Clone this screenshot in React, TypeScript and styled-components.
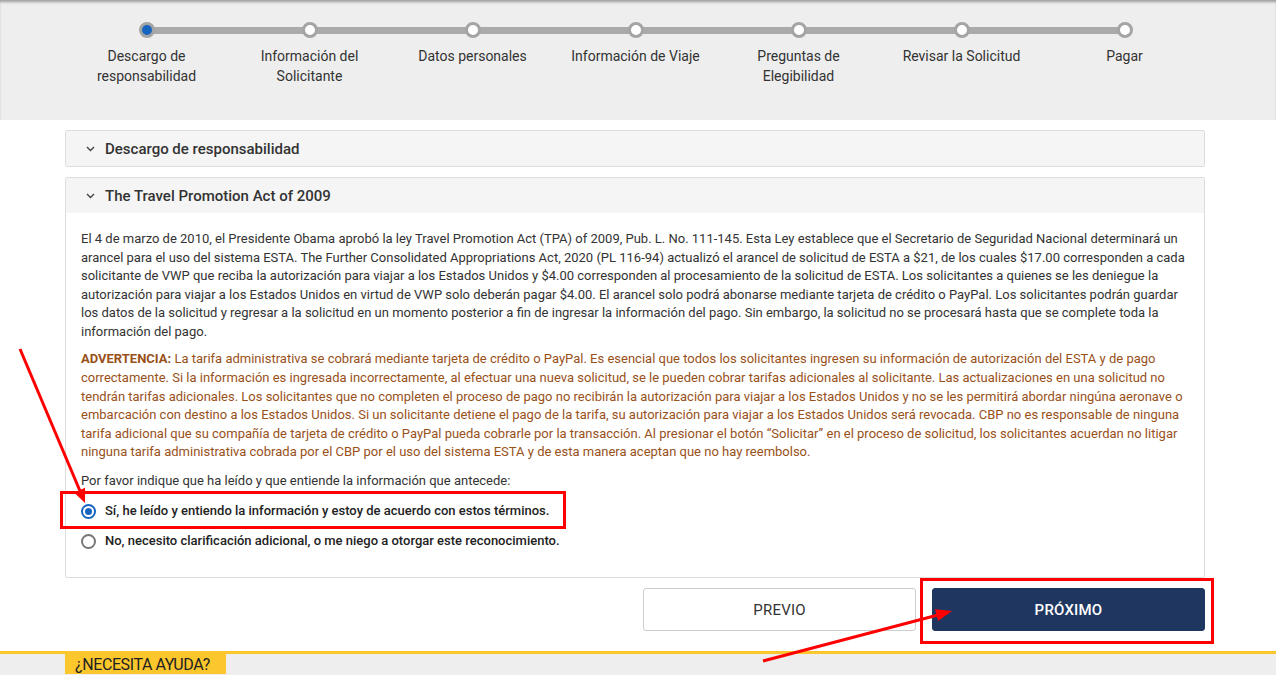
import React from "react";
import styled, { createGlobalStyle } from "styled-components";

const GlobalStyle = createGlobalStyle`
  html, body { margin: 0; padding: 0; background: #fff; }
  body { font-family: Roboto, "Liberation Sans", Arial, sans-serif; color: #333; }
  * { box-sizing: border-box; }
`;

const Page = styled.div`
  position: relative;
  width: 1276px;
  min-height: 675px;
  overflow: hidden;
`;

/* ---------- progress stepper ---------- */
const StepperBar = styled.header`
  background: #eeeeee;
  height: 120px;
  box-shadow: inset 0 3px 3px -1px rgba(0, 0, 0, 0.35);
`;

const Steps = styled.ol`
  position: relative;
  width: 1141px;
  margin: 0 0 0 65px;
  padding: 22px 0 0;
  list-style: none;
  display: grid;
  grid-template-columns: repeat(7, 1fr);

  &::before {
    content: "";
    position: absolute;
    left: 81px;
    right: 82px;
    top: 27px;
    height: 7px;
    background: #aaaaaa;
  }
`;

const Step = styled.li`
  position: relative;
  display: flex;
  flex-direction: column;
  align-items: center;
  text-align: center;
`;

const Dot = styled.span<{ $active?: boolean }>`
  width: 16px;
  height: 16px;
  border-radius: 50%;
  border: 3px solid #a4a4a4;
  background: ${(p) => (p.$active ? "#1565c0" : "#ffffff")};
`;

const StepLabel = styled.span`
  margin-top: 8px;
  font-size: 14px;
  line-height: 20px;
  color: #333;
`;

/* ---------- accordion ---------- */
const Main = styled.main`
  width: 1140px;
  margin: 10px 0 0 65px;
`;

const Panel = styled.section`
  border: 1px solid #dddddd;
  border-radius: 2px;
  background: #fff;
  margin-bottom: 10px;
`;

const PanelHeader = styled.div`
  height: 35px;
  display: flex;
  align-items: center;
  padding-left: 20px;
  background: #f5f5f5;
  font-size: 15px;
  font-weight: 500;
  color: #333;
`;

const Chevron = styled.svg`
  width: 9px;
  height: 6px;
  margin-right: 10px;
  flex: none;
`;

const PanelBody = styled.div`
  padding: 17px 15px 21px;
  font-size: 13px;
  line-height: 18.57px;
`;

const Para = styled.p<{ $gap?: number }>`
  margin: 0 0 ${(p) => p.$gap ?? 10}px;
  color: #333;
`;

const Warning = styled.p`
  margin: 0 0 10px;
  color: #99511a;
`;

const WarningTitle = styled.strong`
  font-weight: 700;
`;

const RadioList = styled.div`
  margin-top: 6px;
  display: flex;
  flex-direction: column;
`;

const RadioRow = styled.label`
  height: 30px;
  display: flex;
  align-items: center;
  gap: 9px;
  font-size: 13px;
  font-weight: 500;
  color: #222;
`;

const RadioMark = styled.span<{ $checked?: boolean }>`
  width: 15px;
  height: 15px;
  border-radius: 50%;
  border: 2px solid ${(p) => (p.$checked ? "#1565c0" : "#777")};
  display: flex;
  align-items: center;
  justify-content: center;
  background: #fff;

  &::after {
    content: "";
    width: 7px;
    height: 7px;
    border-radius: 50%;
    background: ${(p) => (p.$checked ? "#1565c0" : "transparent")};
  }
`;

/* ---------- navigation buttons ---------- */
const ButtonRow = styled.div`
  display: flex;
  justify-content: flex-end;
  gap: 16px;
  margin-top: 0;
`;

const NavButton = styled.button<{ $primary?: boolean }>`
  width: 273px;
  height: 43px;
  border-radius: 3px;
  font-family: Roboto, "Liberation Sans", Arial, sans-serif;
  font-size: 15px;
  font-weight: ${(p) => (p.$primary ? 500 : 400)};
  letter-spacing: 0.2px;
  cursor: pointer;
  border: 1px solid ${(p) => (p.$primary ? "#1e3660" : "#cccccc")};
  background: ${(p) => (p.$primary ? "#1e3660" : "#ffffff")};
  color: ${(p) => (p.$primary ? "#ffffff" : "#333333")};
`;

/* ---------- help footer ---------- */
const Footer = styled.footer`
  margin-top: 20px;
  border-top: 3px solid #fcc72c;
  background: #eeeeee;
  height: 60px;
  padding-left: 65px;
`;

const HelpTab = styled.div`
  display: inline-block;
  background: #fcc72c;
  height: 20px;
  width: 161px;
  padding: 0 0 0 10px;
  font-size: 16px;
  letter-spacing: -0.4px;
  line-height: 22px;
  white-space: nowrap;
  overflow: hidden;
  color: #222;
`;

/* ---------- red call-out marks drawn over the page ---------- */
const Callouts = styled.svg`
  position: absolute;
  top: 0;
  left: 0;
  width: 1276px;
  height: 675px;
  pointer-events: none;
`;

const steps = [
  ["Descargo de", "responsabilidad"],
  ["Información del", "Solicitante"],
  ["Datos personales"],
  ["Información de Viaje"],
  ["Preguntas de", "Elegibilidad"],
  ["Revisar la Solicitud"],
  ["Pagar"],
];

const ChevronIcon = () => (
  <Chevron viewBox="0 0 9 6">
    <path d="M1 1 L4.5 4.5 L8 1" fill="none" stroke="#444" strokeWidth="1.4" />
  </Chevron>
);

export default function App() {
  return (
    <Page>
      <GlobalStyle />
      <StepperBar>
        <Steps>
          {steps.map((lines, i) => (
            <Step key={i}>
              <Dot $active={i === 0} />
              <StepLabel>
                {lines.map((l, j) => (
                  <React.Fragment key={j}>
                    {j > 0 && <br />}
                    {l}
                  </React.Fragment>
                ))}
              </StepLabel>
            </Step>
          ))}
        </Steps>
      </StepperBar>

      <Main>
        <Panel>
          <PanelHeader>
            <ChevronIcon />
            Descargo de responsabilidad
          </PanelHeader>
        </Panel>

        <Panel>
          <PanelHeader>
            <ChevronIcon />
            The Travel Promotion Act of 2009
          </PanelHeader>
          <PanelBody>
            <Para $gap={9}>
              El 4 de marzo de 2010, el Presidente Obama aprobó la ley Travel Promotion Act (TPA) of 2009, Pub. L. No. 111-145. Esta Ley establece que el Secretario de Seguridad Nacional determinará un arancel para el uso del sistema ESTA. The Further Consolidated Appropriations Act, 2020 (PL 116-94) actualizó el arancel de solicitud de ESTA a $21, de los cuales $17.00 corresponden a cada solicitante de VWP que reciba la autorización para viajar a los Estados Unidos y $4.00 corresponden al procesamiento de la solicitud de ESTA. Los solicitantes a quienes se les deniegue la autorización para viajar a los Estados Unidos en virtud de VWP solo deberán pagar $4.00. El arancel solo podrá abonarse mediante tarjeta de crédito o PayPal. Los solicitantes podrán guardar los datos de la solicitud y regresar a la solicitud en un momento posterior a fin de ingresar la información del pago. Sin embargo, la solicitud no se procesará hasta que se complete toda la información del pago.
            </Para>
            <Warning>
              <WarningTitle>ADVERTENCIA:</WarningTitle> La tarifa administrativa se cobrará mediante tarjeta de crédito o PayPal. Es esencial que todos los solicitantes ingresen su información de autorización del ESTA y de pago correctamente. Si la información es ingresada incorrectamente, al efectuar una nueva solicitud, se le pueden cobrar tarifas adicionales al solicitante. Las actualizaciones en una solicitud no tendrán tarifas adicionales. Los solicitantes que no completen el proceso de pago no recibirán la autorización para viajar a los Estados Unidos y no se les permitirá abordar ningúna aeronave o embarcación con destino a los Estados Unidos. Si un solicitante detiene el pago de la tarifa, su autorización para viajar a los Estados Unidos será revocada. CBP no es responsable de ninguna tarifa adicional que su compañía de tarjeta de crédito o PayPal pueda cobrarle por la transacción. Al presionar el botón “Solicitar” en el proceso de solicitud, los solicitantes acuerdan no litigar ninguna tarifa administrativa cobrada por el CBP por el uso del sistema ESTA y de esta manera aceptan que no hay reembolso.
            </Warning>
            <Para $gap={0}>Por favor indique que ha leído y que entiende la información que antecede:</Para>
            <RadioList>
              <RadioRow>
                <RadioMark $checked />
                Sí, he leído y entiendo la información y estoy de acuerdo con estos términos.
              </RadioRow>
              <RadioRow>
                <RadioMark />
                No, necesito clarificación adicional, o me niego a otorgar este reconocimiento.
              </RadioRow>
            </RadioList>
          </PanelBody>
        </Panel>

        <ButtonRow>
          <NavButton>PREVIO</NavButton>
          <NavButton $primary>PRÓXIMO</NavButton>
        </ButtonRow>
      </Main>

      <Footer>
        <HelpTab>¿NECESITA AYUDA?</HelpTab>
      </Footer>

      <Callouts viewBox="0 0 1276 675">
        <g stroke="#ff0000" strokeWidth="3" fill="none">
          <rect x="61.5" y="492.5" width="503" height="35" />
          <rect x="921.5" y="579.5" width="291" height="63" />
          <line x1="20" y1="349" x2="80" y2="491" />
          <line x1="763" y1="661" x2="938" y2="615" />
        </g>
        <g fill="#ff0000">
          <polygon points="85,503 74,492.4 85.1,487.8" />
          <polygon points="952,611 938.1,620.9 935,609.3" />
        </g>
      </Callouts>
    </Page>
  );
}
